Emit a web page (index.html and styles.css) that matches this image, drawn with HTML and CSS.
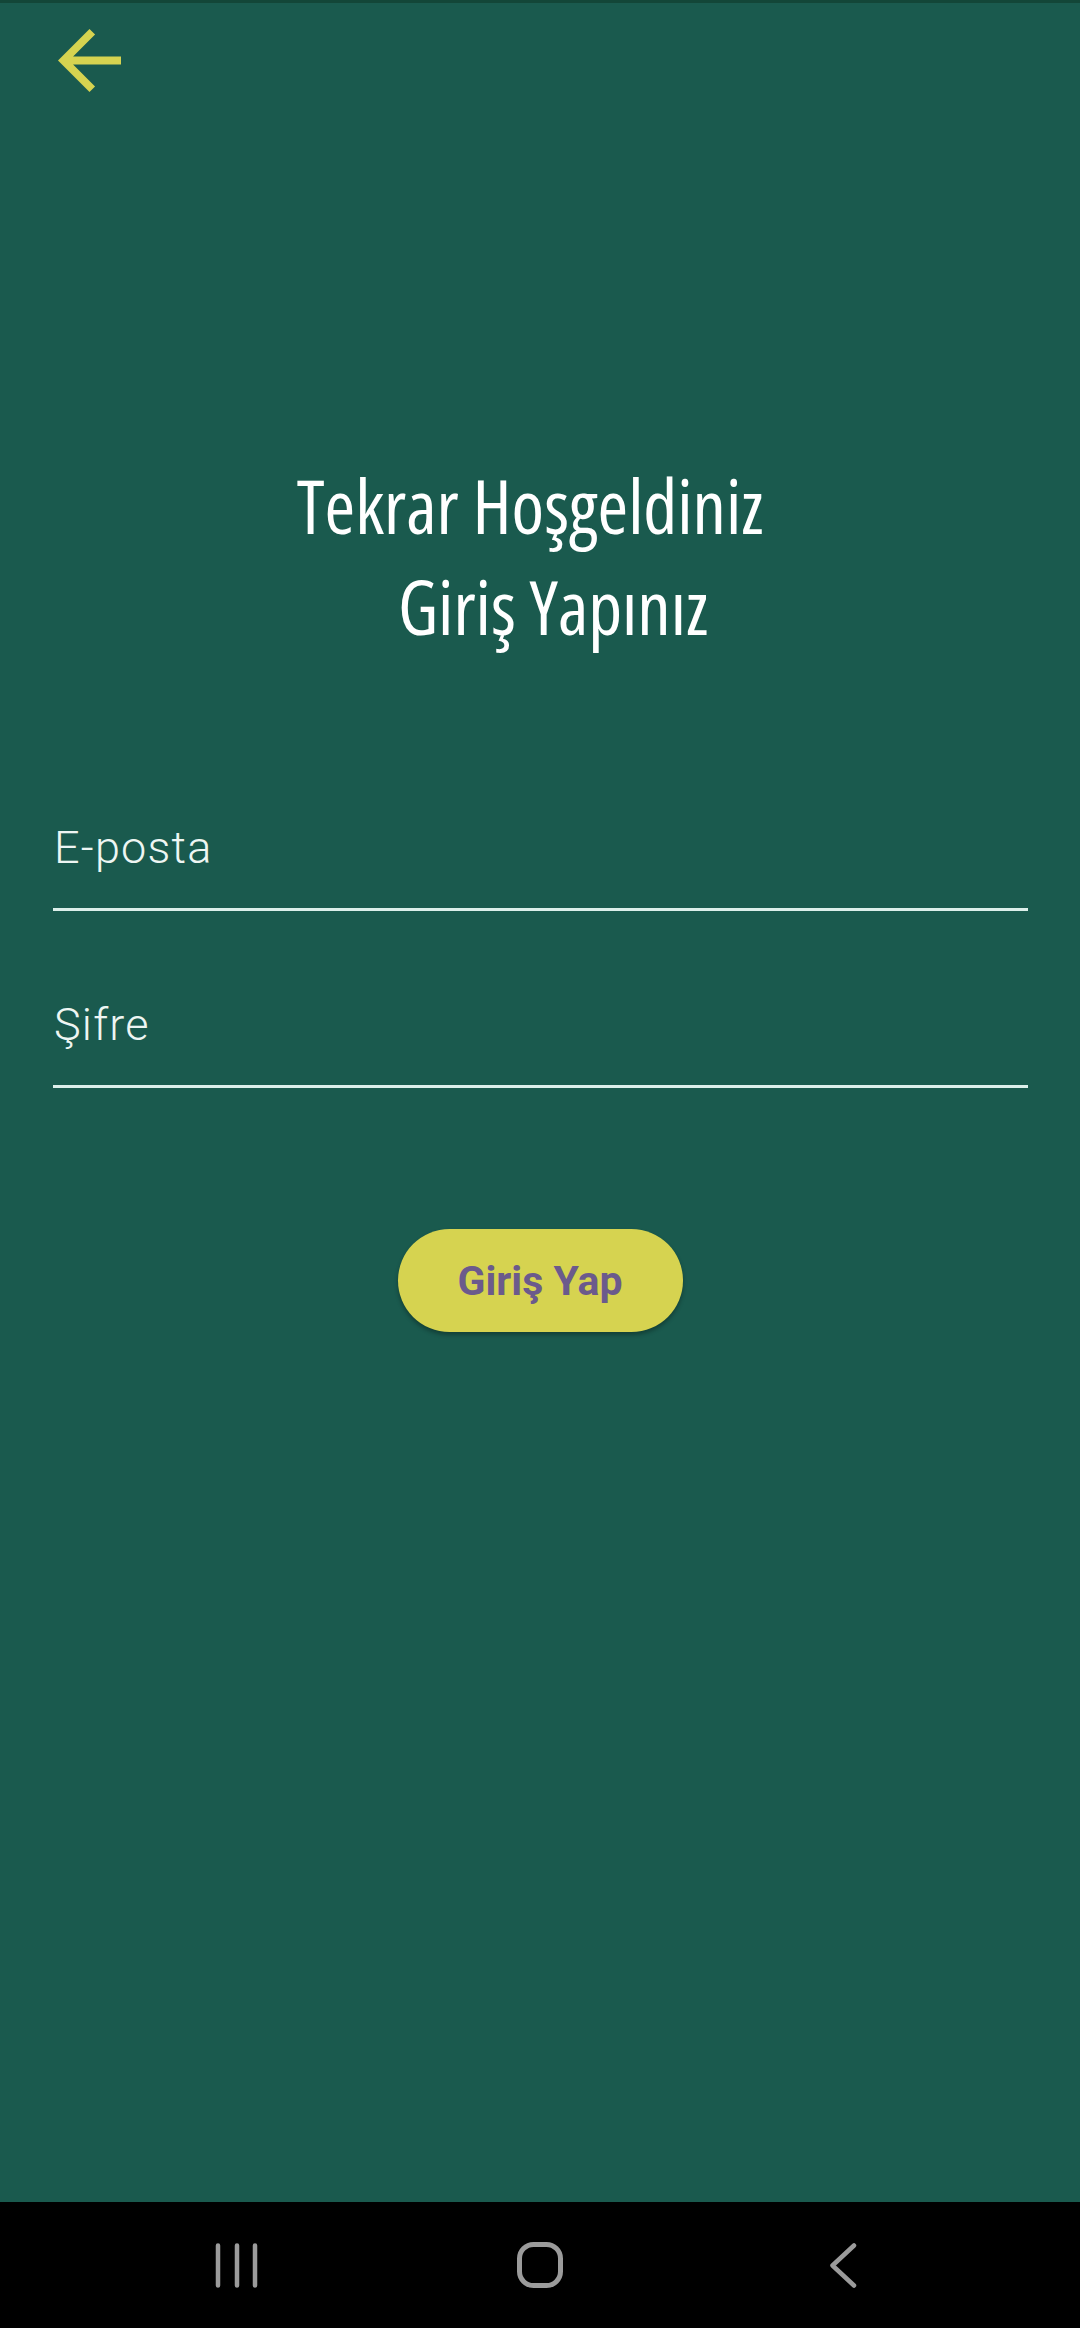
FILE: index.html
```html
<!DOCTYPE html>
<html lang="tr">
<head>
<meta charset="utf-8">
<title>Giriş</title>
<link rel="stylesheet" href="styles.css">
</head>
<body>
<div class="screen">
  <div class="statusbar"></div>
  <header class="topbar">
    <button class="back" aria-label="Geri">
      <svg viewBox="4 4 16 16" width="63" height="63"><path d="M20 11H7.83l5.59-5.59L12 4l-8 8 8 8 1.41-1.41L7.83 13H20v-2z"/></svg>
    </button>
  </header>
  <main class="content">
    <h1 class="title"><span class="line1">Tekrar Hoşgeldiniz</span><span class="line2">Giriş Yapınız</span></h1>
    <div class="form">
      <div class="field"><span class="hint">E-posta</span></div>
      <div class="field"><span class="hint">Şifre</span></div>
    </div>
    <div class="actions"><button class="submit">Giriş Yap</button></div>
  </main>
  <nav class="navbar">
    <div class="navitem">
      <svg width="48" height="45" viewBox="0 0 48 45"><path d="M5 2.5V42.5M24 2.5V42.5M42 2.5V42.5"/></svg>
    </div>
    <div class="navitem">
      <svg width="46" height="46" viewBox="0 0 46 46"><rect x="2.5" y="2.5" width="41" height="41" rx="14"/></svg>
    </div>
    <div class="navitem">
      <svg width="30" height="45" viewBox="0 0 30 45"><path d="M26 2.5L4.5 22.5L26 42.5"/></svg>
    </div>
  </nav>
</div>
</body>
</html>
```
FILE: styles.css
```css
html, body {
  margin: 0;
  padding: 0;
}
body {
  background: #1a5a4e;
  font-family: Roboto, "Noto Sans", sans-serif;
}
.screen {
  min-height: 100vh;
  display: flex;
  flex-direction: column;
}
.statusbar {
  height: 3px;
  background: #134638;
}
.topbar {
  padding: 26px 0 0 58px;
  display: flex;
}
.back {
  border: 0;
  padding: 0;
  background: none;
  width: 63px;
  height: 63px;
  display: block;
}
.back svg {
  display: block;
  fill: #d6d350;
}
.content {
  flex: 1;
  display: flex;
  flex-direction: column;
}
.title {
  margin: 363px 0 0;
  font-family: "Open Sans", sans-serif;
  font-stretch: 75%;
  font-weight: 500;
  font-size: 74px;
  line-height: 101px;
  color: #ffffff;
  text-align: center;
}
.title span { display: block; }
.line1 { padding-right: 20px; }
.line2 { padding-left: 26px; }
.form {
  margin: 166px 52px 0 53px;
  display: flex;
  flex-direction: column;
  gap: 89px;
}
.field {
  border-bottom: 3px solid #dcefea;
  padding-bottom: 35px;
}
.hint {
  display: block;
  font-family: Roboto, sans-serif;
  font-weight: 300;
  font-size: 45px;
  line-height: 50px;
  letter-spacing: 1.2px;
  color: #eef6f3;
  padding-left: 1px;
}
.actions {
  margin-top: 141px;
  display: flex;
  justify-content: center;
}
.submit {
  width: 285px;
  height: 103px;
  border: 0;
  border-radius: 52px;
  background: #d6d350;
  color: #6b5a8c;
  font-family: Roboto, sans-serif;
  font-weight: 700;
  font-size: 41px;
  box-shadow: 0 3px 4px rgba(0,0,0,0.3);
}
.navbar {
  height: 126px;
  background: #000;
  display: flex;
  justify-content: center;
  align-items: center;
}
.navitem {
  width: 303px;
  display: flex;
  justify-content: center;
}
.navitem svg {
  display: block;
  fill: none;
  stroke: #9b9b9b;
  stroke-width: 4.5;
  stroke-linecap: round;
  stroke-linejoin: round;
}
.navitem:nth-child(2) svg { stroke-width: 5; }
```
